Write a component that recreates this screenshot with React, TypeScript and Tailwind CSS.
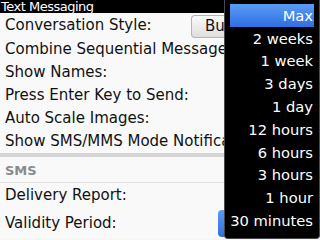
import React from 'react';

const options = ['Max', '2 weeks', '1 week', '3 days', '1 day', '12 hours', '6 hours', '3 hours', '1 hour', '30 minutes'];

const Row = ({ label, className = 'h-[23px]' }: { label: string; className?: string }) => (
  <div className={`flex items-center pl-[5px] whitespace-nowrap overflow-hidden ${className}`}>
    <span className="min-w-0 overflow-hidden">{label}</span>
  </div>
);

export default function App() {
  return (
    <div
      className="relative w-[320px] h-[240px] overflow-hidden bg-[#f6f6f6] text-[15px] text-[#111]"
      style={{ fontFamily: '"DejaVu Sans", sans-serif' }}
    >
      {/* Title bar */}
      <div className="h-[13px] bg-black text-white text-[13px] leading-[13px] pl-[1px] tracking-[-0.5px]">
        Text Messaging
      </div>

      {/* visible part left of the popup */}
      <div className="w-[224px] overflow-hidden">
        <div className="bg-[#f9f9f9]">
          <div className="flex items-center h-[25px] pl-[5px] whitespace-nowrap">
            <span>Conversation Style:</span>
            <div className="ml-auto mt-[1px] h-[23px] w-[33px] shrink-0 overflow-hidden rounded-l-[4px] border border-r-0 border-[#b5b5b5] bg-gradient-to-b from-[#fafafa] to-[#dedede] flex items-center pl-[13px]">
              Bubble
            </div>
          </div>
          <Row label="Combine Sequential Messages:" />
          <Row label="Show Names:" />
          <Row label="Press Enter Key to Send:" />
          <Row label="Auto Scale Images:" />
          <Row label="Show SMS/MMS Mode Notifications:" />
        </div>

        <div className="h-[4px] bg-[#d6d6d6]" />

        <div className="bg-[#f9f9f9]">
          <div className="h-[26px] flex items-end pb-[2px] pl-[5px] border-b border-[#e3e3e3] text-[13px] font-bold text-[#8a8a8a]">
            SMS
          </div>
          <Row label="Delivery Report:" className="h-[24px]" />
          <div className="flex items-center h-[32px] pl-[5px] whitespace-nowrap">
            <span>Validity Period:</span>
            <div className="ml-auto h-[27px] w-[6px] shrink-0 rounded-l-[4px] bg-gradient-to-b from-[#5c9bf3] to-[#2f6fe0]" />
          </div>
        </div>
      </div>

      {/* Popup list */}
      <div className="absolute top-0 left-[224px] w-[96px] h-[239px] bg-black border border-[#4a4a4a] border-t-0 rounded-b-[4px] pt-[4px] pl-[5px] pr-[5px] text-white text-[14.7px]">
        {options.map((o, i) => (
          <div
            key={o}
            className={`h-[22.8px] flex items-center justify-end pr-[1px] whitespace-nowrap leading-[17px] ${
              i === 0 ? 'bg-gradient-to-b from-[#5a9bf5] to-[#2e6fe2]' : ''
            }`}
          >
            {o}
          </div>
        ))}
      </div>
    </div>
  );
}
